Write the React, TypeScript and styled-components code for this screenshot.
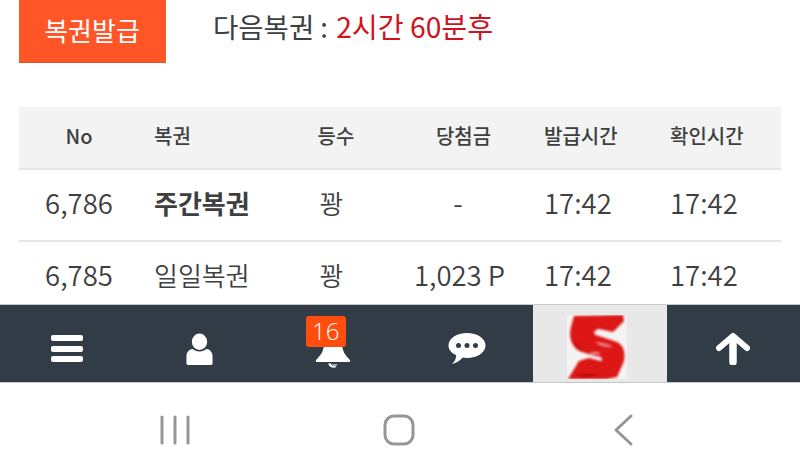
import React from "react";
import styled, { createGlobalStyle } from "styled-components";

const Global = createGlobalStyle`
  html, body { margin: 0; padding: 0; background: #fff; }
  body { font-family: "Noto Sans CJK KR", "Noto Sans", sans-serif; }
  #root { width: 800px; height: 476px; overflow: hidden; }
`;

const Page = styled.div`
  width: 800px;
  height: 476px;
  display: flex;
  flex-direction: column;
  background: #fff;
`;
const Content = styled.main`
  height: 304px;
  overflow: hidden;
  padding: 0 19px;
`;
const TopRow = styled.div`
  display: flex;
  align-items: center;
  height: 63px;
  margin-bottom: 44px;
`;
const IssueButton = styled.button`
  width: 147px;
  height: 63px;
  border: 0;
  border-bottom: 1px solid #d9532c;
  background: #ff5527;
  color: #fff;
  font: 400 26px/1 "Noto Sans CJK KR", sans-serif;
  padding: 0 1px 2px 0;
`;
const Next = styled.div`
  margin-left: 47px;
  margin-top: -11px;
  font-size: 27.5px;
  line-height: 1;
  color: #3c4043;
  white-space: nowrap;
`;
const Remain = styled.span`
  color: #d0121c;
  font-size: 28.2px;
  margin-left: 2px;
`;
const Row = styled.div<{ $head?: boolean }>`
  display: grid;
  grid-template-columns: 120px 146px 102px 142px 126px 126px;
  height: ${(p) => (p.$head ? "57px" : "66px")};
  padding-bottom: ${(p) => (p.$head ? "4px" : "4px")};
  align-items: center;
  background: ${(p) => (p.$head ? "#f3f3f3" : "#fff")};
  border-bottom: 2px solid #e6e6e6;
  font-size: ${(p) => (p.$head ? "20px" : "27.5px")};
  font-weight: ${(p) => (p.$head ? 500 : 350)};
  color: #3f3f3f;
`;
const Center = styled.div<{ $shift?: number }>`
  text-align: center;
  white-space: nowrap;
  line-height: 1;
  padding-left: ${(p) => (p.$shift && p.$shift > 0 ? p.$shift : 0)}px;
  padding-right: ${(p) => (p.$shift && p.$shift < 0 ? -p.$shift : 0)}px;
`;
const Left = styled.div<{ $bold?: boolean }>`
  white-space: nowrap;
  line-height: 1;
  padding-left: 15px;
  font-weight: ${(p) => (p.$bold ? 700 : "inherit")};
`;
const Label = styled.span`
  font-size: 26px;
`;
const TabBar = styled.nav`
  height: 77px;
  display: grid;
  grid-template-columns: repeat(6, 1fr);
  background: #323c47;
  border-top: 1px solid #c8cacc;
  border-bottom: 1px solid #c8c8c8;
`;
const Tab = styled.div<{ $light?: boolean }>`
  position: relative;
  display: flex;
  align-items: center;
  justify-content: center;
  padding-top: ${(p) => (p.$light ? "6px" : "11px")};
  padding-right: ${(p) => (p.$light ? "6px" : "0")};
  background: ${(p) => (p.$light ? "#e8e8e8" : "transparent")};
`;
const Badge = styled.span`
  position: absolute;
  left: 39px;
  top: 11px;
  width: 40px;
  height: 31px;
  border-radius: 3px;
  background: #ff4d0d;
  color: #fff;
  font: 300 24px/30px "Open Sans", sans-serif;
  text-align: center;
`;
const SysNav = styled.div`
  flex: 1;
  display: grid;
  grid-template-columns: repeat(3, 224px);
  padding: 0 0 0 63px;
  align-items: center;
  justify-items: center;
  background: #fff;
`;
const SysSlot = styled.div`
  display: flex;
  padding-top: 1px;
`;

const MenuIcon = () => (
  <svg width="34" height="30" viewBox="0 0 34 30" fill="#fff">
    <rect x="1" y="1" width="32" height="6" rx="2" />
    <rect x="1" y="12" width="32" height="6" rx="2" />
    <rect x="1" y="22" width="32" height="6" rx="2" />
  </svg>
);
const UserIcon = () => (
  <svg width="27" height="33" viewBox="0 0 30 34" fill="#fff" preserveAspectRatio="none">
    <circle cx="15" cy="9" r="8.500" />
    <path d="M2 33a1.5 1.5 0 0 1-1.500-1.500V24c0-4 3-7.500 7-7.500 2 1.500 4 2.500 7.500 2.500s5.500-1 7.500-2.500c4 0 7 3.500 7 7.500v7.500A1.500 1.500 0 0 1 28 33z" />
  </svg>
);
const BellIcon = () => (
  <svg width="36" height="40" viewBox="0 0 36 40" fill="#fff">
    <path d="M18 2c7 0 9 5 9 12 0 8 3 12 8 17 .6 1 0 2-1 2H2c-1 0-1.600-1-1-2 5-5 8-9 8-17 0-7 2-12 9-12z" />
    <path d="M13 34.500h3a3 3 0 0 0 4 2.500l1.500 1a6 6 0 0 1-8.500-3.500z" />
    <path d="M17 35h5.500a3.500 3.500 0 0 1-5 2.500z" opacity=".55" />
  </svg>
);
const ChatIcon = () => (
  <svg width="38" height="32" viewBox="0 0 38 32">
    <path fill="#fff" d="M19 0c10.200 0 18.500 5.400 18.500 12.500S29.200 25 19 25c-1.500 0-3-.1-4.300-.4C12 27.500 8.500 30.500 4 31c2.500-2.500 4-5 4.200-8.800C3.200 20 .5 16.500.5 12.500.5 5.400 8.800 0 19 0z" />
    <circle cx="10.500" cy="12.500" r="2.500" fill="#323c47" />
    <circle cx="19" cy="12.500" r="2.500" fill="#323c47" />
    <circle cx="27.500" cy="12.500" r="2.500" fill="#323c47" />
  </svg>
);
const LogoIcon = () => (
  <svg width="60" height="64" viewBox="0 0 60 64">
    <defs>
      <filter id="soft" x="-10%" y="-10%" width="120%" height="120%">
        <feGaussianBlur stdDeviation="0.9" />
      </filter>
    </defs>
    <rect width="60" height="64" fill="#f4f2f2" />
    <g filter="url(#soft)">
      <path fill="#dd1212" d="M7 1 56 0l1 6-11 11-14-3c-7 2-6 6 0 7l18 6c8 4 8 13 7 19l-7 16-10 2H1l11-18 10-3 12 3c3-2 0-5-6-5l-16-5C3 30 2 20 4 12z" />
      <path fill="#f08a8a" d="M28 27c6 1 12 2 18 5-5 0-13-1-18-5zM22 38c4-1 8-1 12 0-4 2-8 2-12 0z" />
      <path fill="#a90d10" d="M8 25c1 5 5 8 10 9-5 0-10-3-10-9zM10 60c6-1 14-1 22-1-8 3-16 3-22 1z" />
    </g>
  </svg>
);
const UpIcon = () => (
  <svg width="34" height="32" viewBox="0 0 34 32">
    <path d="M3 15 17 3l14 12" fill="none" stroke="#fff" strokeWidth="6" strokeLinecap="round" strokeLinejoin="round" />
    <path d="M17 6v23" fill="none" stroke="#fff" strokeWidth="7.500" strokeLinecap="round" />
  </svg>
);
const RecentsIcon = () => (
  <svg width="30" height="30" viewBox="0 0 30 30" stroke="#969696" strokeWidth="3" strokeLinecap="round">
    <path d="M2 2v26M15 2v26M28 2v26" />
  </svg>
);
const HomeIcon = () => (
  <svg width="32" height="32" viewBox="0 0 32 32" fill="none" stroke="#969696" strokeWidth="3">
    <rect x="2" y="2" width="28" height="28" rx="9" />
  </svg>
);
const BackIcon = () => (
  <svg width="20" height="32" viewBox="0 0 20 32" fill="none" stroke="#969696" strokeWidth="3" strokeLinecap="round" strokeLinejoin="round">
    <path d="M18 2 3 16l15 14" />
  </svg>
);

export default function App() {
  return (
    <Page>
      <Global />
      <Content>
        <TopRow>
          <IssueButton>복권발급</IssueButton>
          <Next>
            다음복권 : <Remain>2시간 60분후</Remain>
          </Next>
        </TopRow>
        <Row $head>
          <Center>No</Center>
          <Left>복권</Left>
          <Center>등수</Center>
          <Center $shift={11}>당첨금</Center>
          <Left>발급시간</Left>
          <Left>확인시간</Left>
        </Row>
        <Row>
          <Center>6,786</Center>
          <Left $bold><Label>주간복권</Label></Left>
          <Center $shift={-9}><Label>꽝</Label></Center>
          <Center>-</Center>
          <Left>17:42</Left>
          <Left>17:42</Left>
        </Row>
        <Row>
          <Center>6,785</Center>
          <Left><Label>일일복권</Label></Left>
          <Center $shift={-9}><Label>꽝</Label></Center>
          <Center $shift={3}>1,023 P</Center>
          <Left>17:42</Left>
          <Left>17:42</Left>
        </Row>
      </Content>
      <TabBar>
        <Tab><MenuIcon /></Tab>
        <Tab><UserIcon /></Tab>
        <Tab>
          <BellIcon />
          <Badge>16</Badge>
        </Tab>
        <Tab><ChatIcon /></Tab>
        <Tab $light><LogoIcon /></Tab>
        <Tab><UpIcon /></Tab>
      </TabBar>
      <SysNav>
        <SysSlot><RecentsIcon /></SysSlot>
        <SysSlot><HomeIcon /></SysSlot>
        <SysSlot><BackIcon /></SysSlot>
      </SysNav>
    </Page>
  );
}
